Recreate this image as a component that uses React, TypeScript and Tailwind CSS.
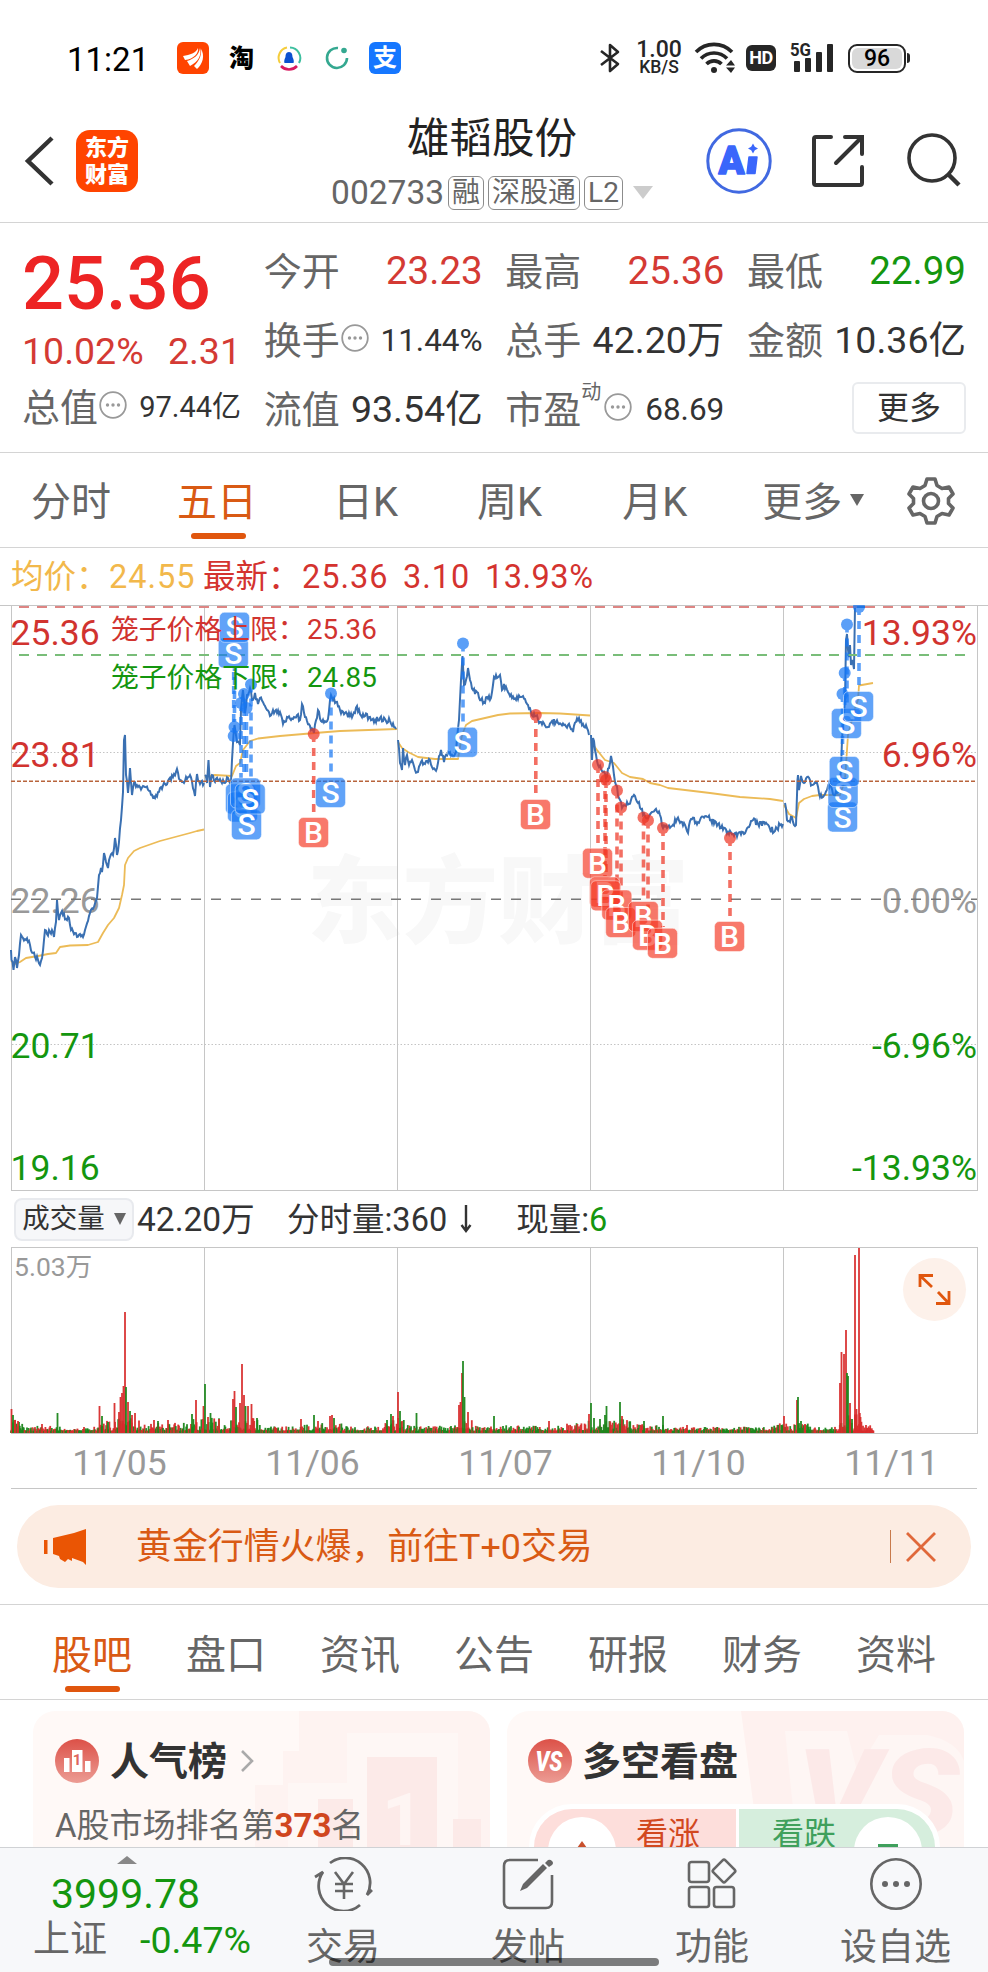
import type { ReactNode } from "react";

type Point = [number, number];

const FONT = "font-[Roboto,'Noto_Sans_CJK_SC',sans-serif]";

// ---------- chart data ----------

const priceDays: Point[][] = [
  [
    [11, 950], [11.5, 960], [13.5, 970], [15, 957], [17, 968], [19, 955], [21, 935], [23, 938], [26, 940], [28, 942],
    [30, 945], [33, 953], [35, 957], [38, 960], [40, 965], [42, 958], [44, 940], [45, 930], [47, 934], [50, 932],
    [52, 930], [54, 937], [56, 922], [57, 900], [59, 920], [62, 911], [66, 919], [69, 918], [71, 930], [75, 933],
    [77, 937], [80, 934], [83, 937], [85, 930], [88, 921], [90, 913], [94, 907], [97, 898], [99, 875], [101, 868],
    [102, 872], [104, 853], [106, 862], [108, 868], [110, 857], [113, 855], [115, 838], [117, 855], [119, 842],
    [121, 820], [123, 792], [124, 740], [125, 735], [126, 775], [128, 793], [130, 768], [132, 795], [134, 783],
    [138, 787], [145, 787], [150, 791], [155, 798], [160, 788], [168, 781], [173, 777], [177, 769], [180, 780],
    [185, 781], [190, 775], [195, 796], [197, 774], [200, 784], [204, 783],
  ],
  [
    [205, 775], [207, 783], [208.5, 760], [210, 787], [212, 775], [215, 782], [220, 779], [225, 783], [228, 778],
    [231, 782], [232, 760], [233.5, 735], [234.5, 725], [237, 742], [240, 745], [241, 710], [243, 690], [245, 713],
    [247, 695], [250, 688], [252, 700], [255, 693], [258, 704], [260, 698], [265, 706], [270, 716], [273, 710],
    [277, 713], [280, 712], [283, 724], [287, 717], [293, 719], [297, 715], [300, 720], [302, 704], [305, 717],
    [310, 726], [314, 733], [318, 710], [322, 722], [326, 722], [328, 719], [331, 695], [333, 700], [336, 702],
    [340, 710], [345, 713], [350, 716], [355, 713], [357, 706], [360, 714], [365, 716], [370, 717], [375, 720],
    [380, 718], [386, 721], [390, 721], [394, 727], [396, 729],
  ],
  [
    [398, 740], [400, 763], [402, 770], [403, 748], [405, 765], [407, 755], [409, 765], [412, 760], [415, 770],
    [418, 772], [421, 762], [425, 764], [430, 760], [433, 769], [437, 768], [441, 750], [444, 762], [448, 752],
    [452, 755], [456, 752], [459, 720], [461, 680], [462.5, 656], [464, 685], [466, 680], [468, 668], [470, 680],
    [473, 690], [477, 692], [481, 700], [485, 703], [487, 697], [490, 700], [493, 685], [494, 677], [497, 678],
    [500, 675], [502, 690], [504, 684], [508, 692], [512, 698], [516, 700], [520, 697], [525, 699], [528, 705],
    [531, 712], [536, 716], [540, 722], [543, 722], [548, 727], [552, 721], [558, 723], [564, 725], [570, 727],
    [573, 732], [576, 722], [579, 718], [583, 724], [586, 725], [589, 735],
  ],
  [
    [591, 735], [592, 760], [593, 738], [595, 750], [598, 765], [603, 772], [606, 778], [609, 768], [611, 756],
    [614, 775], [616, 785], [619, 798], [622, 808], [626, 806], [631, 800], [635, 796], [639, 802], [643, 815],
    [648, 818], [652, 812], [655, 810], [660, 815], [663, 828], [667, 828], [672, 826], [677, 819], [682, 822],
    [688, 833], [691, 819], [696, 822], [700, 820], [706, 816], [711, 820], [716, 822], [721, 828], [728, 832],
    [734, 836], [740, 832], [744, 834], [749, 827], [753, 820], [758, 824], [765, 824], [770, 829], [775, 831],
    [780, 825], [783, 824],
  ],
  [
    [785, 803], [787, 820], [790, 822], [792, 817], [794, 825], [796, 825], [797.5, 780], [798, 775], [799, 790],
    [801, 776], [804, 783], [807, 777], [812, 785], [817, 783], [820, 797], [823, 797], [827, 790], [830, 783],
    [834, 795], [839, 790], [841, 770], [842, 740], [845, 700], [846, 640], [847, 634], [848, 650], [849, 657],
    [850, 645], [851, 665], [852.5, 660], [854, 669], [855, 607], [873, 607],
  ],
];

const averageDays: Point[][] = [
  [
    [11, 961], [15, 964], [20, 962], [26, 958], [38, 956], [48, 954], [56, 953], [60, 947], [70, 945.5], [88, 945],
    [98, 942], [103, 933], [108, 925], [114, 918], [119, 908], [122, 895], [124, 885], [125, 865], [128, 858],
    [134, 851], [140, 848], [160, 841], [190, 833], [197, 831], [204, 829.5],
  ],
  [
    [205, 777], [215, 775], [232, 776], [236, 766], [240, 763], [243, 750], [250, 741], [258, 738.5], [280, 736],
    [315, 733], [340, 731], [397, 729],
  ],
  [
    [398, 742], [402, 748], [408, 752], [418, 757], [435, 759], [458, 759], [462, 735], [466, 725], [472, 721],
    [485, 718], [498, 715], [510, 713.5], [540, 713], [560, 713.5], [590, 715.5],
  ],
  [
    [591, 742], [597, 750], [605, 760], [614, 763], [622, 773], [630, 777], [643, 779], [650, 783], [660, 785],
    [668, 788], [685, 790], [710, 793], [740, 797], [770, 799], [783, 801],
  ],
  [
    [784, 805], [789, 814], [796, 818], [799, 803], [804, 799], [812, 796], [820, 795], [840, 795], [845, 780],
    [848, 735], [855, 708], [858, 700], [859, 685.5], [873, 683],
  ],
];

type Trade = { x: number; y: number; kind: "B" | "S" };

const trades: Trade[] = [
  { x: 233.3, y: 653, kind: "S" },
  { x: 234.5, y: 627.3, kind: "S" },
  { x: 240.5, y: 799, kind: "S" },
  { x: 242.5, y: 807, kind: "S" },
  { x: 245.5, y: 793, kind: "S" },
  { x: 246.5, y: 824.8, kind: "S" },
  { x: 250.2, y: 799, kind: "S" },
  { x: 313.5, y: 832.5, kind: "B" },
  { x: 330.5, y: 792.5, kind: "S" },
  { x: 462.5, y: 742.3, kind: "S" },
  { x: 535.5, y: 814.5, kind: "B" },
  { x: 597.5, y: 863.3, kind: "B" },
  { x: 604.5, y: 892, kind: "B" },
  { x: 605.7, y: 895.8, kind: "B" },
  { x: 616.8, y: 905, kind: "B" },
  { x: 620.7, y: 922.5, kind: "B" },
  { x: 643.3, y: 916.5, kind: "B" },
  { x: 647.5, y: 935.2, kind: "B" },
  { x: 662.5, y: 943.3, kind: "B" },
  { x: 729.5, y: 936.5, kind: "B" },
  { x: 842.5, y: 817, kind: "S" },
  { x: 843, y: 792.5, kind: "S" },
  { x: 844.3, y: 771.5, kind: "S" },
  { x: 846.4, y: 723.5, kind: "S" },
  { x: 858.5, y: 706.5, kind: "S" },
];

// [x, dot y, end of the dashed stem]
const sellStems: [number, number, number][] = [
  [233.7, 736, 668], [234.5, 727, 668], [241, 703, 778], [244, 694, 778], [246.5, 708, 778], [251, 684.5, 778],
  [331, 693.5, 775], [463, 643.5, 725], [847, 624.5, 705], [844.7, 673, 705], [842.5, 694, 755], [859, 607, 690],
];
const buyStems: [number, number, number][] = [
  [313.7, 734, 816], [535.8, 715, 797], [598, 765, 846], [605, 777, 876], [606, 780, 876], [617, 790.5, 888],
  [621, 807.5, 905], [643.5, 817.5, 900], [648, 820.5, 918], [663, 828, 927], [730, 838, 920],
];

const gridX = [11.5, 204.5, 397.5, 590.5, 783.5, 977.5];

// [x, height, colour]
const volumePeaks: [number, number, "r" | "g"][] = [
  [11.5, 24, "r"], [13, 18, "g"], [15, 13, "r"], [18, 12, "r"], [42, 9, "r"], [57.5, 20, "g"], [84, 6, "r"],
  [99.5, 27, "r"], [102, 17, "g"], [108, 11, "g"], [114.5, 30, "r"], [119, 21, "r"], [120.5, 36, "r"], [122, 40, "r"],
  [123.5, 47, "r"], [125, 121, "r"], [126, 46, "g"], [128, 31, "r"], [130, 22, "g"], [132, 18, "r"], [135, 20, "r"],
  [154, 13, "r"], [158, 12, "g"], [168, 13, "r"], [192, 19, "g"], [196, 33, "r"], [203.5, 27, "r"], [205, 49, "g"],
  [208, 16, "r"], [210.5, 20, "g"], [219, 14, "r"], [233, 34, "r"], [234.5, 42, "r"], [236, 26, "g"], [240, 30, "r"],
  [242, 69, "r"], [244, 38, "r"], [245.5, 27, "g"], [248, 27, "r"], [251.5, 29, "r"], [257, 15, "g"], [301, 14, "r"],
  [314, 18, "g"], [318, 12, "r"], [330, 17, "r"], [332, 18, "r"], [334, 15, "g"], [387, 13, "g"], [391, 19, "g"],
  [393, 17, "r"], [398, 41, "r"], [400, 22, "g"], [402, 12, "r"], [416.5, 20, "g"], [459, 28, "r"], [460.5, 31, "r"],
  [462, 60, "r"], [463, 72, "g"], [464.5, 36, "g"], [468, 21, "r"], [494, 17, "g"], [549, 12, "r"], [589, 19, "r"],
  [591, 30, "g"], [594, 15, "g"], [600, 14, "g"], [605, 18, "g"], [606.5, 27, "g"], [620, 31, "g"], [622, 17, "r"],
  [644, 12, "g"], [663, 17, "g"], [687, 8, "r"], [784, 17, "r"], [797, 33, "r"], [798, 36, "g"], [801, 12, "g"],
  [805, 9, "r"], [840, 50, "r"], [841.5, 81, "r"], [844, 79, "r"], [846, 103, "r"], [847, 60, "g"], [848, 57, "g"],
  [850, 30, "r"], [852, 14, "g"], [855, 178, "r"], [856.5, 24, "r"], [859, 185, "r"], [860.5, 16, "r"], [866, 8, "r"],
  [870, 5, "r"],
];

const makeRandom = (seed: number) => {
  let s = seed;
  return () => {
    s = (s * 16807) % 2147483647;
    return s / 2147483647;
  };
};

const toPoints = (points: Point[]) => points.map((p) => p.join(",")).join(" ");

// fills the gaps between the known prices with minute-level noise
const addNoise = (points: Point[], seed: number) => {
  const rand = makeRandom(seed);
  const result: Point[] = [];
  points.forEach((p, i) => {
    result.push(p);
    const next = points[i + 1];
    if (!next || (next[1] === p[1] && p[1] < 610)) return;
    const steps = Math.floor(next[0] - p[0]);
    for (let k = 1; k < steps; k++) {
      const t = k / steps;
      result.push([p[0] + (next[0] - p[0]) * t, +(p[1] + (next[1] - p[1]) * t + (rand() - 0.5) * 6).toFixed(1)]);
    }
  });
  return result;
};

const noiseLevel = (x: number) => {
  if (x < 20) return 11;
  if (x < 30) return 7;
  if (x < 96) return x > 60 && x < 94 ? 2.5 : 5;
  if (x < 140) return 13;
  if (x < 190) return 8;
  if (x < 260) return 13;
  if (x < 300) return 4.5;
  if (x < 345) return 8;
  if (x < 385) return 5;
  if (x < 410) return 13;
  if (x < 455) return 5;
  if (x < 475) return 11;
  if (x < 565) return 5.5;
  if (x < 585) return 8;
  if (x < 632) return 12;
  if (x < 668) return 7;
  if (x < 765) return 4;
  if (x < 812) return 8;
  if (x < 838) return 4;
  return x < 862 ? 18 : 6;
};

const buildVolume = () => {
  const rand = makeRandom(77);
  const bars: [number, number, "r" | "g"][] = [];
  for (let x = 11; x < 874; x += 0.8) {
    const colour = x > 852 ? "r" : rand() > 0.5 ? "r" : "g";
    bars.push([+x.toFixed(1), +(2.2 + Math.pow(rand(), 1.8) * noiseLevel(x)).toFixed(1), colour]);
  }
  return bars.concat(volumePeaks);
};

const volumeBars = buildVolume();

// ---------- small pieces ----------

const Caret = ({ className }: { className: string }) => (
  <svg viewBox="0 0 10 9" className={className} preserveAspectRatio="none">
    <path d="M0 0H10L5 9Z" fill="currentColor" />
  </svg>
);

const InfoDots = () => (
  <svg viewBox="0 0 28 28" className="ml-px size-7 shrink-0 -translate-y-[3px]">
    <circle cx="14" cy="14" r="12.8" fill="none" stroke="#999" strokeWidth="1.8" />
    <circle cx="8.5" cy="14" r="1.7" fill="#999" />
    <circle cx="14" cy="14" r="1.7" fill="#999" />
    <circle cx="19.5" cy="14" r="1.7" fill="#999" />
  </svg>
);

const StatusBar = () => (
  <div className="flex h-[100px] shrink-0 items-center pt-4 pl-[67px] text-black">
    <span className="w-[82px] translate-y-px text-[33px] leading-none">11:21</span>
    <svg viewBox="0 0 32 32" className="ml-7 size-8">
      <rect width="32" height="32" rx="6" fill="#ff4400" />
      <path
        d="M6 14C13 13 19 11 21 6C22 11 17 17 8 18ZM10 19C17 17 22 13 23 6C25 13 21 20 13 24ZM17 24C21 20 25 14 24 7C28 13 26 22 20 27Z"
        fill="#fff"
      />
    </svg>
    <span className="ml-5 w-[25px] text-[25px] leading-none font-black">淘</span>
    <svg viewBox="0 0 26 26" className="ml-[22px] size-[26px]" fill="none" strokeWidth="2">
      <path d="M4 18A10.500 10.500 0 0 1 11 2.500" stroke="#f5cd3c" />
      <path d="M14 2.500A10.500 10.500 0 0 1 23 18" stroke="#3dbf9f" />
      <path d="M5 21A11 11 0 0 0 21 21" stroke="#d81b60" strokeWidth="2.600" />
      <path d="M13 7C10 7 9.500 10 9.500 12C8 15 8 17 8.500 18H17.500C18 17 18 15 16.500 12C16.500 10 16 7 13 7Z" fill="#0b51d0" />
    </svg>
    <svg viewBox="0 0 26 26" className="ml-[22px] size-[26px]" fill="none">
      <path d="M14 3A10 10 0 1 0 23 13" stroke="#34a890" strokeWidth="2.6" />
      <circle cx="20" cy="5.500" r="2.8" fill="#34a890" />
    </svg>
    <div className="ml-[19px] flex size-8 items-center justify-center rounded-md bg-[#1677ff] text-[24px] leading-none font-bold text-white">
      支
    </div>
    <svg viewBox="0 0 22 32" className="ml-[198px] h-8 w-[22px]" fill="none" stroke="#262626" strokeWidth="2.6">
      <path d="M2 9L19 22L11 29V3L19 10L2 23" strokeLinejoin="round" />
    </svg>
    <div className="ml-[15px] flex w-[46px] flex-col items-center text-[#262626]">
      <span className="text-[23px] leading-[19px] font-medium">1.00</span>
      <span className="text-[17.500px] leading-[17px] font-medium">KB/S</span>
    </div>
    <svg viewBox="0 0 42 32" className="ml-3 h-8 w-[42px]" fill="none" stroke="#262626" strokeWidth="3.600">
      <path d="M2 10A25 25 0 0 1 38 10" />
      <path d="M7 16.500A18 18 0 0 1 33 16.500" />
      <path d="M12.500 22A10.500 10.500 0 0 1 27.500 22" />
      <circle cx="20" cy="28" r="3" fill="#262626" stroke="none" />
      <path d="M32 23.500L37 18L41 23.500ZM32 25.500L37 31L41 25.500Z" fill="#262626" stroke="none" />
    </svg>
    <div className="ml-[10px] flex h-[26px] w-[30px] items-center justify-center rounded-md bg-[#262626] text-[18px] leading-none font-bold tracking-tight text-white">
      HD
    </div>
    <svg viewBox="0 -4 44 40" className="ml-[14px] h-10 w-11" fill="#262626">
      <text x="0" y="13.500" fontSize="18" fontWeight="700" textLength="21" lengthAdjust="spacingAndGlyphs">
        5G
      </text>
      <rect x="4" y="19" width="6" height="11" rx="1" />
      <rect x="15" y="16" width="6" height="14" rx="1" />
      <rect x="26" y="10" width="6" height="20" rx="1" />
      <rect x="37" y="2" width="6" height="28" rx="1" />
    </svg>
    <div className="ml-[14px] flex items-center">
      <div className="flex h-[29px] w-[58px] items-center justify-center rounded-[9px] border-2 border-[#262626] p-0.5">
        <div className="flex h-full w-full items-center justify-center rounded-md bg-[#d9d9d9] text-[23px] leading-none font-medium">
          96
        </div>
      </div>
      <div className="ml-px h-[10px] w-[3px] rounded-r bg-[#262626]" />
    </div>
  </div>
);

const Tag = ({ children }: { children: ReactNode }) => (
  <span className="flex h-[34px] items-center rounded-md border border-[#8c8c8c] px-[3px] text-[28px] leading-none whitespace-nowrap">
    {children}
  </span>
);

const Header = () => (
  <header className="flex h-[123px] shrink-0 items-center border-b border-[#d4d4d4]">
    <div className="flex w-[331px] items-center pl-6">
      <svg viewBox="0 0 30 50" className="h-[50px] w-[30px]" fill="none" stroke="#333" strokeWidth="4.500">
        <path d="M28 2L4 25L28 48" />
      </svg>
      <div className="ml-[22px] flex size-[62px] flex-col items-center justify-center rounded-[14px] bg-[#ff4400] text-[22px] leading-[27px] font-black text-white">
        <span>东方</span>
        <span>财富</span>
      </div>
    </div>
    <div className="flex w-[322px] flex-col items-center pt-[9px]">
      <h1 className="text-[42.500px] leading-[54px] text-[#222]">雄韬股份</h1>
      <div className="flex h-[53px] items-center gap-1 text-[#666]">
        <span className="text-[33.500px] leading-none">002733</span>
        <div className="flex gap-1">
          <Tag>融</Tag>
          <Tag>深股通</Tag>
          <Tag>L2</Tag>
        </div>
        <Caret className="ml-[6px] h-[13px] w-5 text-[#ccc]" />
      </div>
    </div>
    <svg viewBox="0 0 66 66" className="ml-[53px] size-[66px]">
      <circle cx="33" cy="33" r="31.200" fill="none" stroke="#4169e1" strokeWidth="3" />
      <text
        x="12.500"
        y="45.500"
        fontSize="38"
        fontWeight="900"
        fill="#3a66fb"
        stroke="#3a66fb"
        strokeWidth="1.500"
        strokeLinejoin="round"
        textLength="26"
        lengthAdjust="spacingAndGlyphs"
      >
        A
      </text>
      <path d="M43 29H51L49 45.500H41Z" fill="#3a66fb" stroke="#3a66fb" strokeLinejoin="round" strokeWidth="1.500" />
      <path d="M47 15.500L48.800 18.700L52 20.500L48.800 22.300L47 25.500L45.200 22.300L42 20.500L45.200 18.700Z" fill="#3a66fb" />
    </svg>
    <svg viewBox="0 0 54 54" className="ml-[39px] size-[54px]" fill="none" stroke="#333" strokeWidth="4" strokeLinecap="round">
      <path d="M20 3H5Q3 3 3 5V49Q3 51 5 51H49Q51 51 51 49V33" />
      <path d="M34 3H51V20M50 4L25 29" strokeLinejoin="miter" />
    </svg>
    <svg viewBox="0 0 56 56" className="ml-[41px] size-[56px]" fill="none" stroke="#333" strokeWidth="3.600">
      <circle cx="26" cy="25" r="23" />
      <path d="M42 41L53 52" strokeWidth="4.500" />
    </svg>
  </header>
);

type QuoteItemProps = {
  label: string;
  value: string;
  color?: string;
  info?: boolean;
  sup?: string;
  size?: string;
};

const QuoteItem = ({ label, value, color = "text-[#333]", info, sup, size = "text-[37.500px]" }: QuoteItemProps) => (
  <div className="flex h-[69px] items-center justify-between">
    <div className="flex items-center whitespace-nowrap text-[38px] leading-none text-[#666]">
      {label}
      {sup && <span className="w-[22px] -translate-y-[18px] text-[20px]">{sup}</span>}
      {info && <InfoDots />}
    </div>
    <span className={`whitespace-nowrap leading-none ${size} ${color}`}>{value}</span>
  </div>
);

const Quote = () => (
  <section className="flex h-[230px] shrink-0 justify-between border-b border-[#d4d4d4] pt-[14px] pr-[22px] pl-[22px]">
    <div className="w-[219px]">
      <div className="flex h-[93px] items-center text-[74px] leading-none font-medium text-[#ed2424]">25.36</div>
      <div className="flex h-[43px] items-center justify-between text-[37.500px] leading-none text-[#d43a34]">
        <span>10.02%</span>
        <span>2.31</span>
      </div>
      <QuoteItem label="总值" value="97.44亿" info size="text-[29px]" />
    </div>
    <div className="w-[219px]">
      <QuoteItem label="今开" value="23.23" color="text-[#d43a34]" size="text-[38.500px]" />
      <QuoteItem label="换手" value="11.44%" info size="text-[31.500px]" />
      <QuoteItem label="流值" value="93.54亿" />
    </div>
    <div className="w-[219px]">
      <QuoteItem label="最高" value="25.36" color="text-[#d43a34]" size="text-[38.500px]" />
      <QuoteItem label="总手" value="42.20万" />
      <QuoteItem label="市盈" value="68.69" sup="动" info size="text-[31.500px]" />
    </div>
    <div className="w-[219px]">
      <QuoteItem label="最低" value="22.99" color="text-[#14960f]" size="text-[38.500px]" />
      <QuoteItem label="金额" value="10.36亿" />
      <div className="flex h-[65px] items-center justify-end">
        <button className="h-[52px] w-[114px] rounded-md border-2 border-[#e9ebee] text-[32px] leading-none text-[#333]">
          更多
        </button>
      </div>
    </div>
  </section>
);

const PeriodTabs = () => (
  <nav className="flex h-[95px] shrink-0 items-center border-b border-[#d4d4d4] pt-[5px] pl-[31px] text-[40px] leading-none text-[#666]">
    <span>分时</span>
    <div className="relative ml-[66px] text-[#d95a14]">
      五日
      <div className="absolute -bottom-[16px] left-[14px] h-[6px] w-[55px] rounded-full bg-[#e0560e]" />
    </div>
    <span className="ml-[76px]">日K</span>
    <span className="ml-[79px]">周K</span>
    <span className="ml-[80px]">月K</span>
    <span className="ml-[75px]">更多</span>
    <Caret className="ml-2 h-3 w-[14px] -translate-y-[3px] text-[#666]" />
    <svg
      viewBox="0 0 48 50"
      className="ml-[43px] h-[50px] w-12 -translate-y-0.5"
      fill="none"
      stroke="#666"
      strokeWidth="3.600"
      strokeLinejoin="round"
    >
      <path d="M20 3H28L30 9.500L35 12.500L42 11L46 18L41.500 22.500V27.500L46 32L42 39L35 37.500L30 40.500L28 47H20L18 40.500L13 37.500L6 39L2 32L6.500 27.500V22.500L2 18L6 11L13 12.500L18 9.500Z" />
      <circle cx="24" cy="25" r="7.500" />
    </svg>
  </nav>
);

const ChartLegend = () => (
  <div className="flex h-[57px] shrink-0 items-center pt-0.5 pl-[11px] text-[32.500px] leading-none whitespace-nowrap">
    <span className="w-[98px] text-[#f2b84b]">均价：</span>
    <span className="w-[94px] tracking-[1px] text-[#f2b84b]">24.55</span>
    <span className="w-[99px] text-[#d4332f]">最新：</span>
    <span className="w-[101px] tracking-[1px] text-[#d4332f]">25.36</span>
    <span className="w-[82px] tracking-[1px] text-[#d4332f]">3.10</span>
    <span className="tracking-[0.5px] text-[#d4332f]">13.93%</span>
  </div>
);

const Badge = ({ x, y, kind }: Trade) => (
  <g>
    <rect
      x={x - 15}
      y={y - 15}
      width="30"
      height="30"
      rx="5"
      fill={kind === "S" ? "#1677f5" : "#f53a25"}
      fillOpacity="0.68"
      stroke="#fff"
      strokeOpacity="0.6"
      strokeWidth="0.800"
    />
    <text x={x} y={y + 10.5} textAnchor="middle" fontSize="30" fontWeight="500" fill="#fff">
      {kind}
    </text>
  </g>
);

const Stem = ({ stem, color }: { stem: [number, number, number]; color: string }) => (
  <g opacity="0.7">
    <line x1={stem[0]} x2={stem[0]} y1={stem[1]} y2={stem[2]} stroke={color} strokeWidth="3.600" strokeDasharray="8 6" />
    <circle cx={stem[0]} cy={stem[1]} r="6" fill={color} />
  </g>
);

const PriceChart = () => (
  <svg viewBox="0 605 988 586" className="block h-[586px] w-[988px] shrink-0">
    <text x="307" y="936" fontSize="95.500" fontWeight="900" fill="#f8f8f8">
      东方财富
    </text>
    <g stroke="#c6c6c6" strokeWidth="1">
      <line x1="0" x2="988" y1="605.500" y2="605.500" />
      <line x1="11" x2="978" y1="1190.500" y2="1190.500" />
      {gridX.map((x) => (
        <line key={x} x1={x} x2={x} y1="606" y2="1190" />
      ))}
    </g>
    <g stroke="#c4c4c4" strokeDasharray="1.500 2">
      <line x1="12" x2="977" y1="752.500" y2="752.500" />
      <line x1="12" x2="977" y1="1044.500" y2="1044.500" />
    </g>
    <g fontSize="35.500" fill="#999">
      <text x="10.500" y="912.500">22.26</text>
      <text x="977" y="912.500" textAnchor="end">0.00%</text>
    </g>
    <line x1="11" x2="977" y1="899.300" y2="899.300" stroke="#777" strokeWidth="1.500" strokeDasharray="10 10" />

    {averageDays.map((day, i) => (
      <polyline key={i} points={toPoints(day)} fill="none" stroke="#ecbb57" strokeWidth="1.800" strokeLinejoin="round" />
    ))}
    {priceDays.map((day, i) => (
      <polyline key={i} points={toPoints(addNoise(day, 31 + i))} fill="none" stroke="#3a70b2" strokeWidth="2" />
    ))}
    <line x1="11" x2="977" y1="781.300" y2="781.300" stroke="#b8643c" strokeWidth="1.400" strokeDasharray="4 2" />
    <line x1="19" x2="965" y1="607" y2="607" stroke="#dd8583" strokeWidth="2" strokeDasharray="10 8" />
    <line x1="19" x2="965" y1="655" y2="655" stroke="#79bd79" strokeWidth="1.800" strokeDasharray="10 8" />

    {sellStems.map((stem, i) => (
      <Stem key={i} stem={stem} color="#1677f5" />
    ))}
    {buyStems.map((stem, i) => (
      <Stem key={i} stem={stem} color="#ee3322" />
    ))}
    {trades.map((trade, i) => (
      <Badge key={i} {...trade} />
    ))}

    <g fontSize="35.500" fill="#d1332f">
      <text x="10.500" y="645">25.36</text>
      <text x="10.500" y="766.700">23.81</text>
      <text x="977" y="645" textAnchor="end">13.93%</text>
      <text x="977" y="766.700" textAnchor="end">6.96%</text>
    </g>
    <g fontSize="35.500" fill="#14960f">
      <text x="10.500" y="1058">20.71</text>
      <text x="10.500" y="1180">19.16</text>
      <text x="977" y="1058" textAnchor="end">-6.96%</text>
      <text x="977" y="1180" textAnchor="end">-13.93%</text>
    </g>
    <g fontSize="27.800">
      <text x="111" y="639" fill="#d1332f">笼子价格上限：</text>
      <text x="307" y="639" fill="#d1332f">25.36</text>
      <text x="111" y="687" fill="#14960f">笼子价格下限：</text>
      <text x="307" y="687" fill="#14960f">24.85</text>
    </g>
  </svg>
);

const VolumeHeader = () => (
  <div className="flex h-[56px] shrink-0 items-center pl-[14px] text-[32.500px] leading-none whitespace-nowrap text-[#333]">
    <div className="flex h-[43px] w-[120px] items-center justify-center gap-[9px] rounded-lg border-2 border-[#e8eaee] bg-[#f6f7f9] text-[27.500px]">
      成交量
      <Caret className="h-3 w-3 text-[#666]" />
    </div>
    <span className="ml-[3px] w-[150px] translate-y-px text-[33.500px]">42.20万</span>
    <span className="translate-y-px">分时量:360</span>
    <svg viewBox="0 0 12 28" className="ml-[13px] h-7 w-3" fill="none" stroke="#333" strokeWidth="2.400">
      <path d="M6 0V26M1.500 20L6 26L10.500 20" />
    </svg>
    <span className="ml-[44px] translate-y-px">
      现量:<span className="text-[#14960f]">6</span>
    </span>
  </div>
);

const VolumeChart = () => (
  <svg viewBox="0 1247 988 188" className="block h-[188px] w-[988px] shrink-0">
    <g stroke="#c6c6c6" strokeWidth="1">
      <line x1="11" x2="978" y1="1247.500" y2="1247.500" />
      <line x1="11" x2="978" y1="1433.500" y2="1433.500" />
      {gridX.map((x) => (
        <line key={x} x1={x} x2={x} y1="1247" y2="1433" />
      ))}
    </g>
    {volumeBars.map(([x, h, colour], i) => (
      <rect
        key={i}
        x={x - 0.9}
        y={1433 - h}
        width="1.800"
        height={h}
        fill={colour === "r" ? "#d82c2c" : "#1b861b"}
        fillOpacity="0.95"
      />
    ))}
    <text x="14" y="1276" fontSize="26.500" fill="#999">
      5.03万
    </text>
    <circle cx="934.500" cy="1289.500" r="31.500" fill="#fdf1ea" />
    <g fill="none" stroke="#e0560e" strokeWidth="2.800">
      <path d="M933 1275.500H920V1287M921 1276.500L932 1287" />
      <path d="M949 1291V1303.500H936M938 1292L948 1302.500" />
    </g>
  </svg>
);

const dates = ["11/05", "11/06", "11/07", "11/10", "11/11"];

const DateAxis = () => (
  <div className="flex h-[53px] shrink-0 pl-[23px] text-[35.500px] leading-[54px] text-[#999]">
    {dates.map((date) => (
      <span key={date} className="w-[193px] translate-y-px text-center">
        {date}
      </span>
    ))}
  </div>
);

const Banner = () => (
  <div className="mx-[17px] mt-4 flex h-[83px] shrink-0 items-center rounded-full bg-[#fcece2] pl-[27px] text-[#d95a14]">
    <svg viewBox="0 0 42 36" className="h-9 w-[42px]" fill="#ea5504">
      <path d="M0 11H3.500V25H0ZM9 9L30 4L42 0V36L39 33L28 29V32L24 30L21 33L16 30L15 27L9 25Z" />
    </svg>
    <span className="ml-[50px] translate-y-px text-[35.900px] leading-none">黄金行情火爆，前往T+0交易</span>
    <div className="ml-auto h-[33px] w-px bg-[#c87a4c]" />
    <svg viewBox="0 0 30 30" className="mr-[35px] ml-[15px] size-[30px]" fill="none" stroke="#e0683a" strokeWidth="2.800">
      <path d="M1 1L29 29M29 1L1 29" />
    </svg>
  </div>
);

const sections = ["股吧", "盘口", "资讯", "公告", "研报", "财务", "资料"];

const SectionTabs = () => (
  <nav className="mt-4 flex h-[96px] shrink-0 border-y border-[#d4d4d4] pt-[31px] pl-[25px] text-[40px] leading-10 text-[#666]">
    {sections.map((name, index) => (
      <div key={name} className="flex w-[134px] flex-col items-center">
        <span className={index === 0 ? "text-[#d95a14]" : ""}>{name}</span>
        {index === 0 && <div className="mt-[10px] h-[6px] w-[55px] rounded-full bg-[#e0560e]" />}
      </div>
    ))}
  </nav>
);

const Cards = () => (
  <section className="flex h-[147px] shrink-0 gap-[17px] overflow-hidden pt-[11px] pl-[33px]">
    <div className="relative h-[220px] w-[457px] shrink-0 overflow-hidden rounded-[22px] bg-[#fff9f7] pt-[28px] pl-[22px]">
      <svg viewBox="0 0 457 136" className="absolute top-0 left-0 h-[136px] w-[457px]">
        <path d="M266 0H457V136H222V74H250V40H266Z" fill="#fef3f1" />
        <path d="M314 22H425V136H255V72H314Z" fill="#fef7f5" />
        <path d="M334 46H404V136H334ZM285 88H320V136H285ZM420 108H448V136H420Z" fill="#fceae8" />
        <text x="349" y="134" fontSize="72" fontWeight="700" fill="#fef5f3">1</text>
      </svg>
      <div className="relative flex h-11 items-center">
        <svg viewBox="0 0 44 44" className="size-11">
          <defs>
            <linearGradient id="medal" x1="0" y1="0" x2="0" y2="1">
              <stop offset="0" stopColor="#dc5148" />
              <stop offset="1" stopColor="#ec9c94" />
            </linearGradient>
          </defs>
          <circle cx="22" cy="22" r="22" fill="url(#medal)" />
          <path d="M9 19H14.500V33H9ZM17 11H27.500V33H17ZM30 22H35.500V33H30Z" fill="#fff" />
          <text x="22" y="26" textAnchor="middle" fontSize="15" fontWeight="700" fill="#de665e">1</text>
        </svg>
        <span className="ml-[11px] translate-y-px text-[39px] leading-none font-bold text-[#333]">人气榜</span>
        <svg viewBox="0 0 14 22" className="ml-[13px] h-[22px] w-[14px]" fill="none" stroke="#aaa" strokeWidth="2.600">
          <path d="M2 1L12 11L2 21" />
        </svg>
      </div>
      <p className="relative mt-[26px] text-[33px] leading-[34px] whitespace-nowrap text-[#666]">
        A股市场排名第<span className="font-bold text-[#d0461e]">373</span>名
      </p>
    </div>
    <div className="relative h-[220px] w-[457px] shrink-0 overflow-hidden rounded-[22px] bg-[#fff9f7] pt-[28px] pl-[21px]">
      <svg viewBox="0 0 457 136" className="absolute top-0 left-0 h-[136px] w-[457px]">
        <path d="M234 0H457V136H252Z" fill="#fef1ef" />
        <path d="M278 20H340L350 60L372 24H420Q450 30 457 50V136H290Z" fill="#fef6f4" />
        <text
          x="290"
          y="124"
          fontSize="120"
          fontWeight="900"
          fontStyle="italic"
          fill="#fce9e8"
          textLength="162"
          lengthAdjust="spacingAndGlyphs"
        >
          VS
        </text>
      </svg>
      <div className="relative flex h-11 items-center">
        <svg viewBox="0 0 44 44" className="size-11">
          <circle cx="22" cy="22" r="22" fill="url(#medal)" />
          <text x="21" y="32" textAnchor="middle" fontSize="27" fontWeight="900" fontStyle="italic" fill="#fff" textLength="27" lengthAdjust="spacingAndGlyphs">
            VS
          </text>
        </svg>
        <span className="ml-[10px] translate-y-px text-[39px] leading-none font-bold text-[#333]">多空看盘</span>
      </div>
      <div className="relative mt-[21px] ml-px flex h-[86px] w-[411px] overflow-hidden rounded-full border-[5px] border-white bg-white text-[32px] leading-[34px]">
        <div className="flex h-full w-[202px] bg-[#fddedb] pl-[14px]">
          <div className="mt-[8px] flex size-[68px] justify-center rounded-full bg-white pt-[24px]">
            <svg viewBox="0 0 20 14" className="h-[14px] w-5">
              <path d="M10 0L20 14H0Z" fill="#c9502c" />
            </svg>
          </div>
          <span className="mt-[8px] ml-[20px] text-[#d2481f]">看涨</span>
        </div>
        <div className="ml-[3px] flex h-full flex-1 bg-[#d6eedd] pl-[33px]">
          <span className="mt-[8px] text-[#3fa05c]">看跌</span>
          <div className="mt-[8px] ml-[18px] flex size-[68px] justify-center rounded-full bg-white pt-[27px]">
            <div className="h-3 w-5 bg-[#3fa05c]" />
          </div>
        </div>
      </div>
    </div>
  </section>
);

const NavItem = ({ label, className, children }: { label: string; className: string; children: ReactNode }) => (
  <div className={`flex flex-col items-center ${className}`}>
    <svg viewBox="0 0 64 54" className="mt-[9px] h-[54px] w-16" fill="none" stroke="#666" strokeWidth="2.600">
      {children}
    </svg>
    <span className="mt-[18px] text-[37px] leading-[38px] whitespace-nowrap">{label}</span>
  </div>
);

const BottomBar = () => (
  <footer className="relative flex h-[125px] shrink-0 border-t border-[#d0d2d5] bg-[#f7f8fa] text-[#666]">
    <div className="w-[251px] pl-[33px]">
      <Caret className="mt-2 ml-[84px] h-[8px] w-5 rotate-180 text-[#888]" />
      <div className="mt-[9px] ml-[18px] text-[41px] leading-[42px] text-[#14960f]">3999.78</div>
      <div className="mt-[5px] flex justify-between text-[37px] leading-[40px]">
        <span>上证</span>
        <span className="text-[37.500px] text-[#14960f]">-0.47%</span>
      </div>
    </div>
    <NavItem label="交易" className="w-[184px]">
      <path d="M19 6A25 25 0 0 1 56 38L61 33M49 48A25 25 0 0 1 12 15L4 20" strokeWidth="2.800" />
      <path d="M24 15L33 27L42 15M33 27V42M24 27H42M24 34H42" />
    </NavItem>
    <NavItem label="发帖" className="w-[186px]">
      <path d="M42 3H14Q8 3 8 9V45Q8 51 14 51H50Q56 51 56 45V18" />
      <path d="M24 34L27 27L47 7L51 11L31 31Z" fill="#666" stroke="none" />
      <path d="M49 6L52 3Q54 2 56 4Q58 6 56 8L53 10Z" fill="#666" stroke="none" />
    </NavItem>
    <NavItem label="功能" className="w-[182px]">
      <rect x="9" y="5" width="20" height="20" rx="2.500" />
      <rect x="9" y="30" width="20" height="20" rx="2.500" />
      <rect x="34" y="30" width="20" height="20" rx="2.500" />
      <rect x="35.500" y="5.500" width="17" height="17" rx="2" transform="rotate(45 44 14)" />
    </NavItem>
    <NavItem label="设自选" className="w-[185px]">
      <circle cx="32" cy="27" r="24.700" />
      <g fill="#666" stroke="none">
        <circle cx="21" cy="27" r="3" />
        <circle cx="32" cy="27" r="3" />
        <circle cx="43" cy="27" r="3" />
      </g>
    </NavItem>
    <div className="absolute bottom-[6px] left-[329px] h-2 w-[330px] rounded-full bg-black/50" />
  </footer>
);

export default function App() {
  return (
    <main className={`flex h-[1972px] w-[988px] flex-col overflow-hidden bg-white ${FONT}`}>
      <StatusBar />
      <Header />
      <Quote />
      <PeriodTabs />
      <ChartLegend />
      <PriceChart />
      <VolumeHeader />
      <VolumeChart />
      <DateAxis />
      <div className="mx-[11px] h-px shrink-0 bg-[#c6c6c6]" />
      <Banner />
      <SectionTabs />
      <Cards />
      <BottomBar />
    </main>
  );
}
